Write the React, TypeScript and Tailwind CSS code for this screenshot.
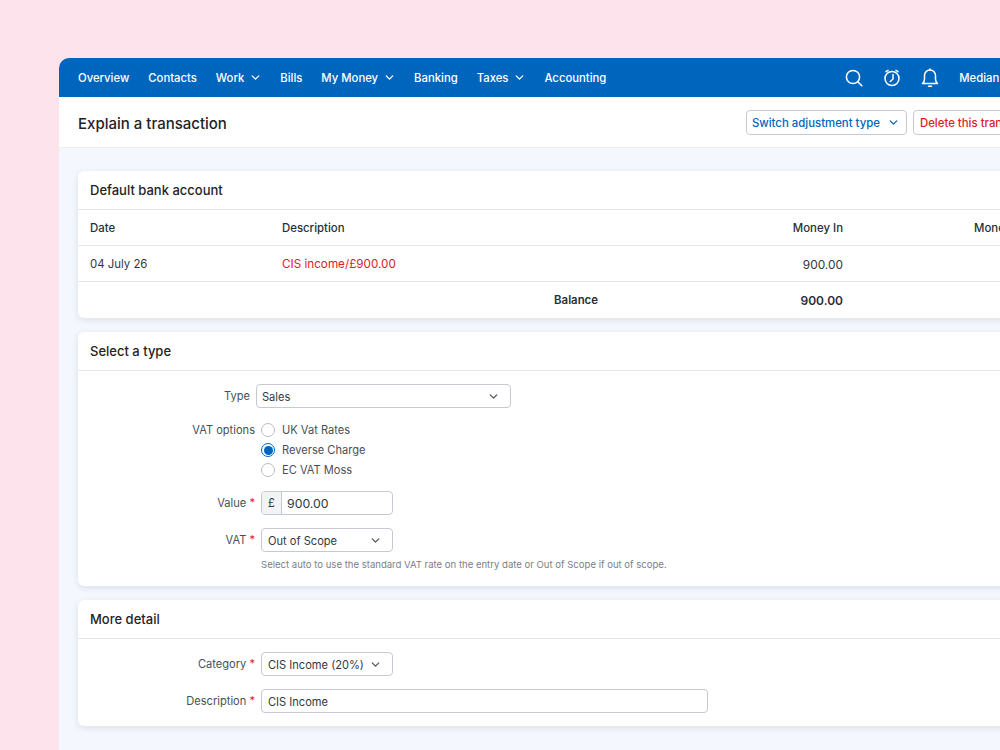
import React from "react";
import { ChevronDown } from "lucide-react";

const navItems: [string, boolean][] = [
  ["Overview", false],
  ["Contacts", false],
  ["Work", true],
  ["Bills", false],
  ["My Money", true],
  ["Banking", false],
  ["Taxes", true],
  ["Accounting", false],
];

function Chev({ className }: { className: string }) {
  return <ChevronDown className={className} strokeWidth={2.4} />;
}

function Card({ title, children }: { title: string; children: React.ReactNode }) {
  return (
    <section className="rounded-md bg-white shadow-[0_2px_6px_rgba(30,50,90,0.12)]">
      <h2 className="flex h-[39px] items-center border-b border-[#e6e8ec] px-3 pt-[2px] text-[13px] font-medium text-[#1f2328]">{title}</h2>
      {children}
    </section>
  );
}

function Label({ text, required }: { text: string; required?: boolean }) {
  return (
    <span className="w-[177px] shrink-0 text-right text-[11.1px] text-[#4a4f55]">
      {text}
      {required && <span className="text-[#e0202c]"> *</span>}
    </span>
  );
}

function Radio({ label, checked }: { label: string; checked?: boolean }) {
  return (
    <div className="flex h-5 items-center gap-[7px]">
      {checked ? (
        <span className="flex size-[14px] items-center justify-center rounded-full border border-[#0066bd]">
          <span className="size-[9px] rounded-full bg-[#0066bd]" />
        </span>
      ) : (
        <span className="size-[14px] rounded-full border border-[#b9bec5] bg-white" />
      )}
      <span className="text-[11.1px] text-[#4a4f55]">{label}</span>
    </div>
  );
}

export default function App() {
  return (
    <div
      className="h-[750px] w-[1000px] overflow-hidden bg-[#fde3ec] pl-[59px] pt-[58px] text-[#33383d]"
      style={{ fontFamily: '"Inter", "Noto Sans", sans-serif' }}
    >
      <div className="h-[700px] w-[1100px] overflow-hidden rounded-tl-[10px] bg-[#f4f7fd]">
        <header className="flex h-[39px] items-center bg-[#0066bd] pl-[19px] text-white">
          <nav className="flex items-center gap-[19px] text-[11.3px] font-medium">
            {navItems.map(([name, caret]) => (
              <span key={name} className="flex items-center gap-[5px]">
                <span className="pt-[2px]">{name}</span>
                {caret && <Chev className="-mr-px size-[13px]" />}
              </span>
            ))}
          </nav>
          <div className="ml-[239px] flex items-center gap-[20px]">
            <svg width="18" height="18" viewBox="0 0 18 18" fill="none" stroke="white" strokeWidth="1.5" strokeLinecap="round">
              <circle cx="8" cy="8" r="6.6" />
              <path d="M12.8 12.8l4 4" />
            </svg>
            <svg width="18" height="18" viewBox="0 0 18 18" fill="none" stroke="white" strokeWidth="1.5" strokeLinecap="round" strokeLinejoin="round">
              <circle cx="9" cy="9.5" r="7" />
              <path d="M10 5.5V10L7.3 12.5" />
              <path d="M3 2.6L5 1.4M15 2.6L13 1.4" />
            </svg>
            <svg width="18" height="20" viewBox="0 0 18 20" fill="none" stroke="white" strokeWidth="1.5" strokeLinecap="round" strokeLinejoin="round">
              <path d="M1.5 15.5c1.5-1.2 2-2.6 2-4.5V7.5a5.5 5.5 0 0 1 11 0V11c0 1.9.5 3.3 2 4.5z" />
              <path d="M7.5 18.3h3" />
              <path d="M9 1v1" />
            </svg>
            <span className="whitespace-nowrap pt-[2px] text-[11.3px] font-medium">Median Ltd</span>
          </div>
        </header>

        <div className="flex h-[51px] items-center border-b border-[#eceef2] bg-white pl-[19px]">
          <h1 className="pt-[4px] text-[15px] font-medium text-[#1f2328]">Explain a transaction</h1>
          <div className="ml-[519px] flex items-center gap-[6px] text-[11.4px] font-medium">
            <button className="flex h-[25px] w-[161px] items-center justify-between rounded border border-[#c5cad1] bg-white pl-[5px] pr-[6px] text-[#0066bd]">
              <span className="pt-[3px]">Switch adjustment type</span>
              <Chev className="size-[13px]" />
            </button>
            <button className="flex h-[25px] items-center whitespace-nowrap rounded border border-[#c5cad1] bg-white px-[6px] text-[#e0202c]">
              <span className="pt-[3px]">Delete this transaction</span>
            </button>
          </div>
        </div>

        <main className="flex flex-col gap-[14px] px-[19px] pt-[23px]">
          <Card title="Default bank account">
            <div className="text-[11.4px]">
              <div className="grid h-9 grid-cols-[192px_401px_160px_1fr] items-center border-b border-[#e6e8ec] px-3 pt-[2px] font-medium text-[#2a2e33]">
                <span>Date</span>
                <span>Description</span>
                <span className="text-right">Money In</span>
                <span className="whitespace-nowrap pl-[131px]">Money Out</span>
              </div>
              <div className="grid h-9 grid-cols-[192px_401px_160px_1fr] items-center border-b border-[#e6e8ec] px-3 pt-[2px]">
                <span>04 July 26</span>
                <span className="text-[11.7px] text-[#e0202c]">CIS income/£900.00</span>
                <span className="text-right text-[11.9px]">900.00</span>
                <span />
              </div>
              <div className="grid h-9 grid-cols-[192px_316px_245px_1fr] items-center px-3 pt-[2px] font-semibold text-[#2a2e33]">
                <span />
                <span className="text-right">Balance</span>
                <span className="text-right text-[12px]">900.00</span>
                <span />
              </div>
            </div>
          </Card>

          <Card title="Select a type">
            <div className="flex flex-col pb-[14px] pt-[13px]">
              <div className="flex h-6 items-center">
                <span className="w-[172px] shrink-0 text-right text-[11.1px] text-[#4a4f55]">Type</span>
                <div className="ml-[6px] flex h-6 w-[255px] items-center justify-between rounded border border-[#c5cad1] pl-[5px] pr-[10px] text-[11.1px]">
                  <span className="pt-[2px]">Sales</span>
                  <Chev className="size-[13px] text-[#555]" />
                </div>
              </div>
              <div className="mt-[12px] flex">
                <div className="flex h-5 items-center">
                  <Label text="VAT options" />
                </div>
                <div className="ml-[6px]">
                  <Radio label="UK Vat Rates" />
                  <Radio label="Reverse Charge" checked />
                  <Radio label="EC VAT Moss" />
                </div>
              </div>
              <div className="mt-[11px] flex h-6 items-center">
                <Label text="Value" required />
                <div className="ml-[6px] flex h-6 w-[132px] items-stretch overflow-hidden rounded border border-[#c5cad1] text-[11.1px]">
                  <span className="flex w-5 items-center justify-center border-r border-[#c5cad1] bg-[#f2f3f5]">£</span>
                  <span className="flex items-center pl-[5px] pt-[2px] text-[12.3px]">900.00</span>
                </div>
              </div>
              <div className="mt-[13px] flex h-6 items-center">
                <Label text="VAT" required />
                <div className="ml-[6px] flex h-6 w-[132px] items-center justify-between rounded border border-[#c5cad1] pl-[6px] pr-[10px] text-[11.1px]">
                  <span className="pt-[2px]">Out of Scope</span>
                  <Chev className="size-[13px] text-[#555]" />
                </div>
              </div>
              <p className="ml-[183px] mt-[5px] text-[9.55px] leading-[15px] text-[#7b8086]">
                Select auto to use the standard VAT rate on the entry date or Out of Scope if out of scope.
              </p>
            </div>
          </Card>

          <Card title="More detail">
            <div className="flex flex-col gap-[13px] py-[13px]">
              <div className="flex h-6 items-center">
                <Label text="Category" required />
                <div className="ml-[6px] flex h-6 w-[132px] items-center justify-between whitespace-nowrap rounded border border-[#c5cad1] pl-[6px] pr-[10px] text-[11.1px]">
                  <span className="pt-[2px]">CIS Income (20%)</span>
                  <Chev className="size-[13px] text-[#555]" />
                </div>
              </div>
              <div className="flex h-6 items-center">
                <Label text="Description" required />
                <div className="ml-[6px] flex h-6 w-[447px] items-center rounded border border-[#c5cad1] pl-[6px] text-[11.1px]">
                  <span className="pt-[2px]">CIS Income</span>
                </div>
              </div>
            </div>
          </Card>
        </main>
      </div>
    </div>
  );
}
